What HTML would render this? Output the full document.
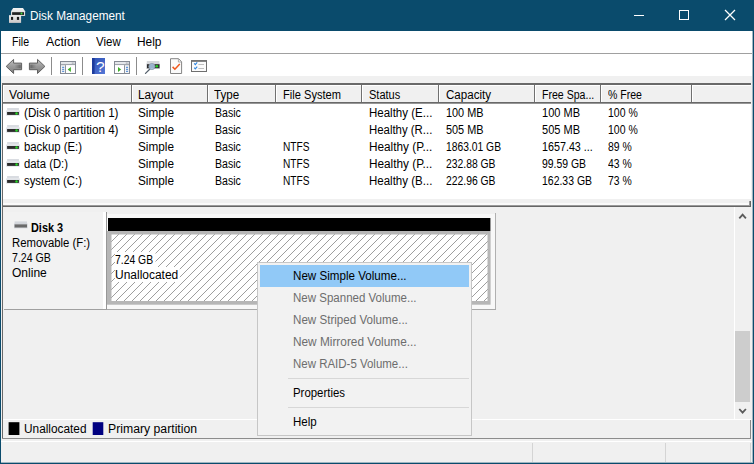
<!DOCTYPE html>
<html>
<head>
<meta charset="utf-8">
<title>Disk Management</title>
<style>
html,body{margin:0;padding:0;}
body{width:754px;height:464px;overflow:hidden;position:relative;background:#f0f0f0;font-family:"Liberation Sans",sans-serif;font-size:12px;color:#000;}
.a{position:absolute;}
.t{position:absolute;white-space:nowrap;line-height:14px;height:14px;transform-origin:0 50%;}
svg{position:absolute;overflow:visible;}
.hs{top:85px;width:2px;height:17px;border-left:1px solid #707070;border-right:1px solid #fff;box-sizing:border-box;}

</style>
</head>
<body>
<!-- window chrome -->
<div class="a" style="left:0;top:0;width:754px;height:31px;background:#0a4b6c;"></div>
<div class="a" style="left:1px;top:31px;width:752px;height:22px;background:#fff;"></div>
<div class="a" style="left:1px;top:53px;width:752px;height:1px;background:#a0a0a0;"></div>
<div class="a" style="left:1px;top:54px;width:752px;height:22px;background:#fff;"></div>


<!-- title icon -->
<svg style="left:0;top:0" width="40" height="31" viewBox="0 0 40 31">
  <defs>
    <linearGradient id="tg1" x1="0" y1="0" x2="0" y2="1"><stop offset="0" stop-color="#f4f4f4"/><stop offset="1" stop-color="#d2d2d2"/></linearGradient>
    <linearGradient id="tg2" x1="0" y1="0" x2="0" y2="1"><stop offset="0" stop-color="#ececec"/><stop offset="1" stop-color="#c9c6c6"/></linearGradient>
  </defs>
  <path d="M13.2 8 L23 8 L25.1 11.2 L25.1 15.9 L11 15.9 L11 11.2 Z" fill="url(#tg1)"/>
  <rect x="12.1" y="12.2" width="11.9" height="2.7" fill="#222"/>
  <circle cx="21.5" cy="13.6" r="1" fill="#3be03b"/>
  <rect x="9" y="15.2" width="12.1" height="7.7" fill="url(#tg2)"/>
  <rect x="11" y="16.9" width="2.1" height="3" fill="#1a1a1a"/>
  <rect x="16.9" y="16.9" width="2.2" height="3" fill="#1a1a1a"/>
</svg>
<!-- window buttons -->
<svg style="left:0;top:0" width="754" height="31" viewBox="0 0 754 31">
  <g stroke="#fff" stroke-width="1" fill="none">
    <line x1="634" y1="15.5" x2="644" y2="15.5"/>
    <rect x="679.5" y="10.5" width="9" height="9"/>
    <path d="M725 10 L735 20 M735 10 L725 20" stroke-width="1.25"/>
  </g>
</svg>


<!-- toolbar icons -->
<svg style="left:0;top:0" width="220" height="80" viewBox="0 0 220 80">
  <defs>
    <linearGradient id="ag" x1="0" y1="0" x2="0" y2="1"><stop offset="0" stop-color="#c0c0c0"/><stop offset="0.5" stop-color="#9a9a9a"/><stop offset="1" stop-color="#7c7c7c"/></linearGradient>
    <linearGradient id="as1" x1="0" y1="0" x2="1" y2="0"><stop offset="0" stop-color="#6a6a6a" stop-opacity="0"/><stop offset="1" stop-color="#5a5a5a" stop-opacity="0.85"/></linearGradient>
    <linearGradient id="as2" x1="0" y1="0" x2="1" y2="0"><stop offset="0" stop-color="#5a5a5a" stop-opacity="0.85"/><stop offset="1" stop-color="#6a6a6a" stop-opacity="0"/></linearGradient>
    <linearGradient id="hg" x1="0" y1="0" x2="1" y2="1"><stop offset="0" stop-color="#2b50b4"/><stop offset="1" stop-color="#5577d6"/></linearGradient>
    <linearGradient id="dg" x1="0" y1="0" x2="0" y2="1"><stop offset="0" stop-color="#eeeeee"/><stop offset="1" stop-color="#cfcfcf"/></linearGradient>
  </defs>
  <!-- back / forward -->
  <path d="M6.2 66.4 L13.6 59.4 L13.6 63.1 L21.6 63.1 L21.6 69.7 L13.6 69.7 L13.6 73.5 Z" fill="url(#ag)" stroke="#606060" stroke-width="1" stroke-linejoin="round"/>
  <rect x="14.5" y="64.6" width="6.2" height="3.6" fill="url(#as1)"/>
  <path d="M44.9 66.4 L37.5 59.4 L37.5 63.1 L29.4 63.1 L29.4 69.7 L37.5 69.7 L37.5 73.5 Z" fill="url(#ag)" stroke="#606060" stroke-width="1" stroke-linejoin="round"/>
  <rect x="30.4" y="64.6" width="6.2" height="3.6" fill="url(#as2)"/>
  <!-- separators -->
  <rect x="51" y="57" width="1" height="18" fill="#8c8c8c"/>
  <rect x="82" y="57" width="1" height="18" fill="#8c8c8c"/>
  <rect x="136" y="57" width="1" height="18" fill="#8c8c8c"/>
  <!-- show/hide tree -->
  <g>
    <rect x="60.5" y="61.5" width="15" height="12" fill="#f4f5f7" stroke="#858a94" stroke-width="1"/>
    <rect x="61" y="62" width="14" height="2.2" fill="#e4e6ea"/>
    <rect x="61" y="64.2" width="14" height="1" fill="#8d929c"/>
    <rect x="65" y="65.2" width="1" height="8" fill="#8d929c"/>
    <rect x="62.1" y="66.8" width="2.1" height="1" fill="#3f7fd0"/>
    <rect x="62.1" y="68.8" width="2.1" height="1" fill="#3f7fd0"/>
    <rect x="62.1" y="70.8" width="2.1" height="1" fill="#3f7fd0"/>
    <rect x="66" y="65.2" width="9" height="7.8" fill="#fff"/>
    <path d="M67.7 69.5 L70.9 67 L70.9 72 Z" fill="#3fae2a"/>
    <rect x="71.8" y="62.6" width="1" height="1" fill="#8d929c"/><rect x="73.4" y="62.6" width="1" height="1" fill="#8d929c"/>
  </g>
  <!-- help -->
  <rect x="92" y="58" width="13" height="16" fill="url(#hg)"/>
  <rect x="92" y="58" width="2.6" height="16" fill="#1d3c9c"/>
  <text x="100.3" y="71.6" font-family="Liberation Sans, sans-serif" font-size="15.5" fill="#fff" text-anchor="middle">?</text>
  <!-- action pane -->
  <g>
    <rect x="114.5" y="61.5" width="15" height="12" fill="#f4f5f7" stroke="#858a94" stroke-width="1"/>
    <rect x="115" y="62" width="14" height="2.2" fill="#e4e6ea"/>
    <rect x="115" y="64.2" width="14" height="1" fill="#8d929c"/>
    <rect x="115" y="65.2" width="9" height="7.8" fill="#fff"/>
    <rect x="124" y="65.2" width="1" height="8" fill="#8d929c"/>
    <rect x="126" y="66.8" width="2.1" height="1" fill="#3f7fd0"/>
    <rect x="126" y="68.8" width="2.1" height="1" fill="#3f7fd0"/>
    <rect x="126" y="70.8" width="2.1" height="1" fill="#3f7fd0"/>
    <path d="M121.1 69.5 L118 67 L118 72 Z" fill="#3fae2a"/>
    <rect x="125.8" y="62.6" width="1" height="1" fill="#8d929c"/><rect x="127.4" y="62.6" width="1" height="1" fill="#8d929c"/>
  </g>
  <!-- rescan -->
  <g>
    <rect x="146.8" y="61" width="12.6" height="3.2" fill="#d6d8db"/>
    <rect x="146.2" y="63.6" width="13.8" height="5.4" fill="#d0d2d6"/>
    <rect x="147" y="64.2" width="12.5" height="4" fill="#2c2c2c"/>
    <circle cx="156.8" cy="66.3" r="1.3" fill="#22d322"/>
    <path d="M150.2 68.8 L145.5 73.4" stroke="#55606c" stroke-width="1.3" stroke-linecap="round"/>
    <circle cx="151.9" cy="66.5" r="3.1" fill="#a9c6e2" fill-opacity="0.88" stroke="#8a99aa" stroke-width="0.8"/>
  </g>
  <!-- properties doc -->
  <g>
    <path d="M170.5 58.7 L178.6 58.7 L181.6 61.8 L181.6 73.5 L170.5 73.5 Z" fill="#fafafa" stroke="#858585" stroke-width="1"/>
    <path d="M178.4 58.9 L178.4 62 L181.4 62" fill="none" stroke="#9a9a9a" stroke-width="0.8"/>
    <path d="M172.6 66.9 L174.9 69.2 L179.8 63.9" fill="none" stroke="#f0581c" stroke-width="1.5"/>
  </g>
  <!-- checklist -->
  <g>
    <rect x="191.5" y="60.7" width="15" height="10.8" fill="#fbfbfb" stroke="#6f6f6f" stroke-width="1"/>
    <rect x="191" y="60.2" width="16" height="1.6" fill="#6f6f6f"/>
    <path d="M194.2 63.4 L195.3 64.6 L197.2 62.4" fill="none" stroke="#2f86e0" stroke-width="1.1"/>
    <path d="M194.2 67.6 L195.3 68.8 L197.2 66.6" fill="none" stroke="#2f86e0" stroke-width="1.1"/>
    <rect x="198.4" y="64" width="5.6" height="0.9" fill="#b8b8b8"/>
    <rect x="198.4" y="68" width="5.6" height="0.9" fill="#b8b8b8"/>
  </g>
</svg>
<!-- list view -->
<div class="a" style="left:2px;top:83px;width:749px;height:116px;background:#fff;"></div>
<div class="a" style="left:2px;top:83px;width:749px;height:2px;background:#696969;"></div>
<div class="a" style="left:3px;top:85px;width:748px;height:17px;background:#f0f0f0;border-top:1px solid #fff;box-sizing:border-box;"></div>
<div class="a" style="left:3px;top:102px;width:748px;height:1px;background:#696969;"></div>
<div class="a" style="left:3px;top:103px;width:748px;height:1px;background:#969696;"></div>
<div class="a" style="left:3px;top:86px;width:1px;height:16px;background:#fff;"></div>
<!-- header separators -->
<div class="a hs" style="left:131px;"></div>
<div class="a hs" style="left:207px;"></div>
<div class="a hs" style="left:275px;"></div>
<div class="a hs" style="left:361px;"></div>
<div class="a hs" style="left:438px;"></div>
<div class="a hs" style="left:534px;"></div>
<div class="a hs" style="left:600px;"></div>
<div class="a hs" style="left:691px;"></div>


<!-- volume icons -->
<svg style="left:0;top:0" width="40" height="200" viewBox="0 0 40 200">
  <g transform="translate(0 108)">
    <rect x="7.1" y="0" width="11.8" height="2.6" fill="#d9dce1"/>
    <rect x="6.1" y="2.4" width="13.8" height="5.3" fill="#dfe2e7"/>
    <rect x="7.1" y="4" width="11.8" height="2.9" fill="#2b2b2b"/>
    <circle cx="16.5" cy="5.5" r="1.25" fill="#27d227"/>
  </g>
  <g transform="translate(0 125)">
    <rect x="7.1" y="0" width="11.8" height="2.6" fill="#d9dce1"/>
    <rect x="6.1" y="2.4" width="13.8" height="5.3" fill="#dfe2e7"/>
    <rect x="7.1" y="4" width="11.8" height="2.9" fill="#2b2b2b"/>
    <circle cx="16.5" cy="5.5" r="1.25" fill="#27d227"/>
  </g>
  <g transform="translate(0 142)">
    <rect x="7.1" y="0" width="11.8" height="2.6" fill="#d9dce1"/>
    <rect x="6.1" y="2.4" width="13.8" height="5.3" fill="#dfe2e7"/>
    <rect x="7.1" y="4" width="11.8" height="2.9" fill="#2b2b2b"/>
    <circle cx="16.5" cy="5.5" r="1.25" fill="#27d227"/>
  </g>
  <g transform="translate(0 159)">
    <rect x="7.1" y="0" width="11.8" height="2.6" fill="#d9dce1"/>
    <rect x="6.1" y="2.4" width="13.8" height="5.3" fill="#dfe2e7"/>
    <rect x="7.1" y="4" width="11.8" height="2.9" fill="#2b2b2b"/>
    <circle cx="16.5" cy="5.5" r="1.25" fill="#27d227"/>
  </g>
  <g transform="translate(0 176)">
    <rect x="7.1" y="0" width="11.8" height="2.6" fill="#d9dce1"/>
    <rect x="6.1" y="2.4" width="13.8" height="5.3" fill="#dfe2e7"/>
    <rect x="7.1" y="4" width="11.8" height="2.9" fill="#2b2b2b"/>
    <circle cx="16.5" cy="5.5" r="1.25" fill="#27d227"/>
  </g>
</svg>
<!-- splitter -->
<div class="a" style="left:3px;top:203px;width:747px;height:2px;background:#fafafa;"></div>
<div class="a" style="left:3px;top:205px;width:748px;height:1px;background:#9a9a9a;"></div>
<div class="a" style="left:3px;top:206px;width:748px;height:1px;background:#666;"></div>
<div class="a" style="left:749px;top:201px;width:1px;height:5px;background:#9a9a9a;"></div>
<div class="a" style="left:750px;top:201px;width:1px;height:6px;background:#666;"></div>

<!-- left sunken border -->
<div class="a" style="left:2px;top:83px;width:1px;height:356px;background:#696969;"></div>

<!-- disk box -->
<div class="a" style="left:4px;top:212px;width:100px;height:97px;background:#f2f2f2;"></div>
<div class="a" style="left:103px;top:212px;width:3px;height:97px;background:#fff;"></div>
<div class="a" style="left:106px;top:212px;width:1px;height:98px;background:#979797;"></div>
<div class="a" style="left:4px;top:309px;width:103px;height:1px;background:#a0a0a0;"></div>


<!-- disk icon -->
<svg style="left:0;top:0" width="40" height="240" viewBox="0 0 40 240">
  <rect x="14.6" y="221.4" width="12.4" height="2.6" fill="#d4d7dc"/>
  <rect x="14" y="223.6" width="13.6" height="4.7" fill="#cfd2d7"/>
  <rect x="14.6" y="224.4" width="12.4" height="3.1" fill="#6a6a6a"/>
</svg>
<!-- partition container -->
<div class="a" style="left:107px;top:214px;width:388px;height:95px;background:#f8f8f8;"></div>
<div class="a" style="left:495px;top:213px;width:1px;height:97px;background:#b0b0b0;"></div>
<div class="a" style="left:107px;top:309px;width:389px;height:1px;background:#a8a8a8;"></div>
<svg style="left:0;top:0" width="754" height="464" viewBox="0 0 754 464"><rect x="107" y="231" width="383.6" height="73.7" fill="#b6b6b6"/><rect x="108" y="218" width="382.4" height="13" fill="#000"/></svg>
<svg style="left:0;top:0" width="754" height="464" viewBox="0 0 754 464">
  <defs>
    <pattern id="h" patternUnits="userSpaceOnUse" x="0" y="0" width="8" height="8">
      <rect width="8" height="8" fill="#fff"/>
      <path d="M-1 2 L2 -1 M-1 10 L10 -1 M7 10 L10 7" stroke="#7e7e7e" stroke-width="0.75" fill="none"/>
    </pattern>
  </defs>
  <rect x="111.5" y="234.5" width="376" height="66.5" fill="url(#h)"/>
  <rect x="115" y="252" width="40.5" height="15" fill="#fff"/>
  <rect x="115" y="267" width="64.8" height="15" fill="#fff"/>
</svg>

<!-- scrollbar -->
<div class="a" style="left:734px;top:207px;width:1px;height:212px;background:#fff;"></div>
<div class="a" style="left:735px;top:331px;width:15px;height:71px;background:#cdcdcd;"></div>
<svg style="left:0;top:0" width="754" height="464" viewBox="0 0 754 464">
  <g stroke="#5a5a5a" stroke-width="1.8" fill="none">
    <path d="M739.3 218.3 L742.6 214.6 L745.9 218.3"/>
    <path d="M739.3 409 L742.6 412.7 L745.9 409"/>
  </g>
</svg>

<!-- legend -->
<div class="a" style="left:3px;top:419px;width:748px;height:1px;background:#fff;"></div>
<svg style="left:0;top:0" width="120" height="464" viewBox="0 0 120 464"><rect x="8.6" y="422.2" width="10.8" height="12.8" fill="#000"/><rect x="92.7" y="422.2" width="10.6" height="12.8" fill="#000080"/></svg>
<div class="a" style="left:2px;top:438px;width:749px;height:1px;background:#8c8c8c;"></div>
<div class="a" style="left:750px;top:420px;width:1px;height:19px;background:#8a8a8a;"></div>

<!-- status bar -->
<div class="a" style="left:1px;top:441px;width:752px;height:1px;background:#fff;"></div>
<div class="a" style="left:532px;top:443px;width:1px;height:19px;background:#d4d4d4;"></div>
<div class="a" style="left:665px;top:443px;width:1px;height:19px;background:#d4d4d4;"></div>
<div class="a" style="left:750px;top:443px;width:1px;height:19px;background:#d4d4d4;"></div>

<!-- context menu -->
<div class="a" style="left:257px;top:262px;width:215px;height:174px;background:#f2f2f2;border:1px solid #c6c6c6;box-sizing:border-box;z-index:10;"></div>
<div class="a" style="left:260px;top:265px;width:209px;height:22px;background:#91c9f7;z-index:11;"></div>
<div class="a" style="left:288px;top:378px;width:181px;height:1px;background:#d7d7d7;z-index:11;"></div>
<div class="a" style="left:288px;top:407px;width:181px;height:1px;background:#d7d7d7;z-index:11;"></div>

<!-- window border -->
<div class="a" style="left:0;top:0;width:1px;height:464px;background:#0a4b6c;z-index:30;"></div>
<div class="a" style="left:753px;top:0;width:1px;height:464px;background:#0a4b6c;z-index:30;"></div>
<div class="a" style="left:752px;top:31px;width:1px;height:431px;background:#a0b6c2;z-index:30;"></div>
<div class="a" style="left:0;top:463px;width:754px;height:1px;background:#0a4b6c;z-index:30;"></div>
<div class="a" style="left:1px;top:462px;width:752px;height:1px;background:#9fb5c1;z-index:29;"></div>

<!-- text -->
<span class="t" style="left:29.70px;top:8.84px;transform:scaleX(0.9807);color:#fff;">Disk Management</span>
<span class="t" style="left:11.50px;top:35.14px;transform:scaleX(0.8799);">File</span>
<span class="t" style="left:45.60px;top:35.14px;transform:scaleX(1.0313);">Action</span>
<span class="t" style="left:96.00px;top:35.14px;transform:scaleX(0.9569);">View</span>
<span class="t" style="left:137.40px;top:35.14px;transform:scaleX(0.9918);">Help</span>
<span class="t" style="left:9.00px;top:88.14px;transform:scaleX(1.0161);">Volume</span>
<span class="t" style="left:138.00px;top:88.14px;transform:scaleX(0.9811);">Layout</span>
<span class="t" style="left:214.25px;top:88.14px;transform:scaleX(0.9680);">Type</span>
<span class="t" style="left:282.50px;top:88.14px;transform:scaleX(0.9253);">File System</span>
<span class="t" style="left:368.50px;top:88.14px;transform:scaleX(0.9186);">Status</span>
<span class="t" style="left:445.50px;top:88.14px;transform:scaleX(0.9639);">Capacity</span>
<span class="t" style="left:541.50px;top:88.14px;transform:scaleX(0.8809);">Free Spa...</span>
<span class="t" style="left:607.75px;top:88.14px;transform:scaleX(0.8781);">% Free</span>
<span class="t" style="left:23.50px;top:105.84px;transform:scaleX(0.9705);">(Disk 0 partition 1)</span>
<span class="t" style="left:138.00px;top:105.84px;transform:scaleX(0.9796);">Simple</span>
<span class="t" style="left:214.75px;top:105.84px;transform:scaleX(0.8775);">Basic</span>
<span class="t" style="left:368.50px;top:105.84px;transform:scaleX(0.9591);">Healthy (E...</span>
<span class="t" style="left:446.00px;top:105.84px;transform:scaleX(0.9069);">100 MB</span>
<span class="t" style="left:541.50px;top:105.84px;transform:scaleX(0.9189);">100 MB</span>
<span class="t" style="left:608.00px;top:105.84px;transform:scaleX(0.8732);">100 %</span>
<span class="t" style="left:23.50px;top:122.84px;transform:scaleX(0.9705);">(Disk 0 partition 4)</span>
<span class="t" style="left:138.00px;top:122.84px;transform:scaleX(0.9796);">Simple</span>
<span class="t" style="left:214.75px;top:122.84px;transform:scaleX(0.8775);">Basic</span>
<span class="t" style="left:368.50px;top:122.84px;transform:scaleX(0.9495);">Healthy (R...</span>
<span class="t" style="left:446.00px;top:122.84px;transform:scaleX(0.9069);">505 MB</span>
<span class="t" style="left:541.50px;top:122.84px;transform:scaleX(0.9189);">505 MB</span>
<span class="t" style="left:608.00px;top:122.84px;transform:scaleX(0.8732);">100 %</span>
<span class="t" style="left:23.50px;top:139.84px;transform:scaleX(0.9452);">backup (E:)</span>
<span class="t" style="left:138.00px;top:139.84px;transform:scaleX(0.9796);">Simple</span>
<span class="t" style="left:214.75px;top:139.84px;transform:scaleX(0.8775);">Basic</span>
<span class="t" style="left:282.50px;top:139.84px;transform:scaleX(0.8459);">NTFS</span>
<span class="t" style="left:368.50px;top:139.84px;transform:scaleX(0.9822);">Healthy (P...</span>
<span class="t" style="left:446.00px;top:139.84px;transform:scaleX(0.8588);">1863.01 GB</span>
<span class="t" style="left:541.50px;top:139.84px;transform:scaleX(0.8957);">1657.43 ...</span>
<span class="t" style="left:608.00px;top:139.84px;transform:scaleX(0.8670);">89 %</span>
<span class="t" style="left:23.50px;top:156.84px;transform:scaleX(0.9425);">data (D:)</span>
<span class="t" style="left:138.00px;top:156.84px;transform:scaleX(0.9796);">Simple</span>
<span class="t" style="left:214.75px;top:156.84px;transform:scaleX(0.8775);">Basic</span>
<span class="t" style="left:282.50px;top:156.84px;transform:scaleX(0.8459);">NTFS</span>
<span class="t" style="left:368.50px;top:156.84px;transform:scaleX(0.9822);">Healthy (P...</span>
<span class="t" style="left:446.00px;top:156.84px;transform:scaleX(0.8628);">232.88 GB</span>
<span class="t" style="left:541.50px;top:156.84px;transform:scaleX(0.8679);">99.59 GB</span>
<span class="t" style="left:608.00px;top:156.84px;transform:scaleX(0.8670);">43 %</span>
<span class="t" style="left:23.50px;top:173.84px;transform:scaleX(0.9456);">system (C:)</span>
<span class="t" style="left:138.00px;top:173.84px;transform:scaleX(0.9796);">Simple</span>
<span class="t" style="left:214.75px;top:173.84px;transform:scaleX(0.8775);">Basic</span>
<span class="t" style="left:282.50px;top:173.84px;transform:scaleX(0.8459);">NTFS</span>
<span class="t" style="left:368.50px;top:173.84px;transform:scaleX(0.9591);">Healthy (B...</span>
<span class="t" style="left:446.00px;top:173.84px;transform:scaleX(0.8628);">222.96 GB</span>
<span class="t" style="left:541.50px;top:173.84px;transform:scaleX(0.8715);">162.33 GB</span>
<span class="t" style="left:608.00px;top:173.84px;transform:scaleX(0.8670);">73 %</span>
<span class="t" style="left:30.60px;top:220.84px;transform:scaleX(0.9080);font-weight:bold;">Disk 3</span>
<span class="t" style="left:11.90px;top:235.84px;transform:scaleX(0.9445);">Removable (F:)</span>
<span class="t" style="left:11.90px;top:251.14px;transform:scaleX(0.8825);">7.24 GB</span>
<span class="t" style="left:11.90px;top:266.14px;transform:scaleX(1.0025);">Online</span>
<span class="t" style="left:114.90px;top:252.84px;transform:scaleX(0.8654);">7.24 GB</span>
<span class="t" style="left:114.90px;top:267.84px;transform:scaleX(0.9984);">Unallocated</span>
<span class="t" style="left:24.40px;top:422.14px;transform:scaleX(0.9864);">Unallocated</span>
<span class="t" style="left:108.20px;top:422.14px;transform:scaleX(1.0198);">Primary partition</span>
<span class="t" style="left:293.00px;top:269.09px;transform:scaleX(0.9676);z-index:20;">New Simple Volume...</span>
<span class="t" style="left:293.00px;top:291.09px;transform:scaleX(0.9598);color:#6d6d6d;z-index:20;">New Spanned Volume...</span>
<span class="t" style="left:293.00px;top:313.09px;transform:scaleX(0.9672);color:#6d6d6d;z-index:20;">New Striped Volume...</span>
<span class="t" style="left:293.00px;top:334.94px;transform:scaleX(0.9857);color:#6d6d6d;z-index:20;">New Mirrored Volume...</span>
<span class="t" style="left:293.00px;top:356.84px;transform:scaleX(0.9565);color:#6d6d6d;z-index:20;">New RAID-5 Volume...</span>
<span class="t" style="left:292.80px;top:385.84px;transform:scaleX(0.9499);z-index:20;">Properties</span>
<span class="t" style="left:292.80px;top:415.04px;transform:scaleX(0.9598);z-index:20;">Help</span>
</body>
</html>
